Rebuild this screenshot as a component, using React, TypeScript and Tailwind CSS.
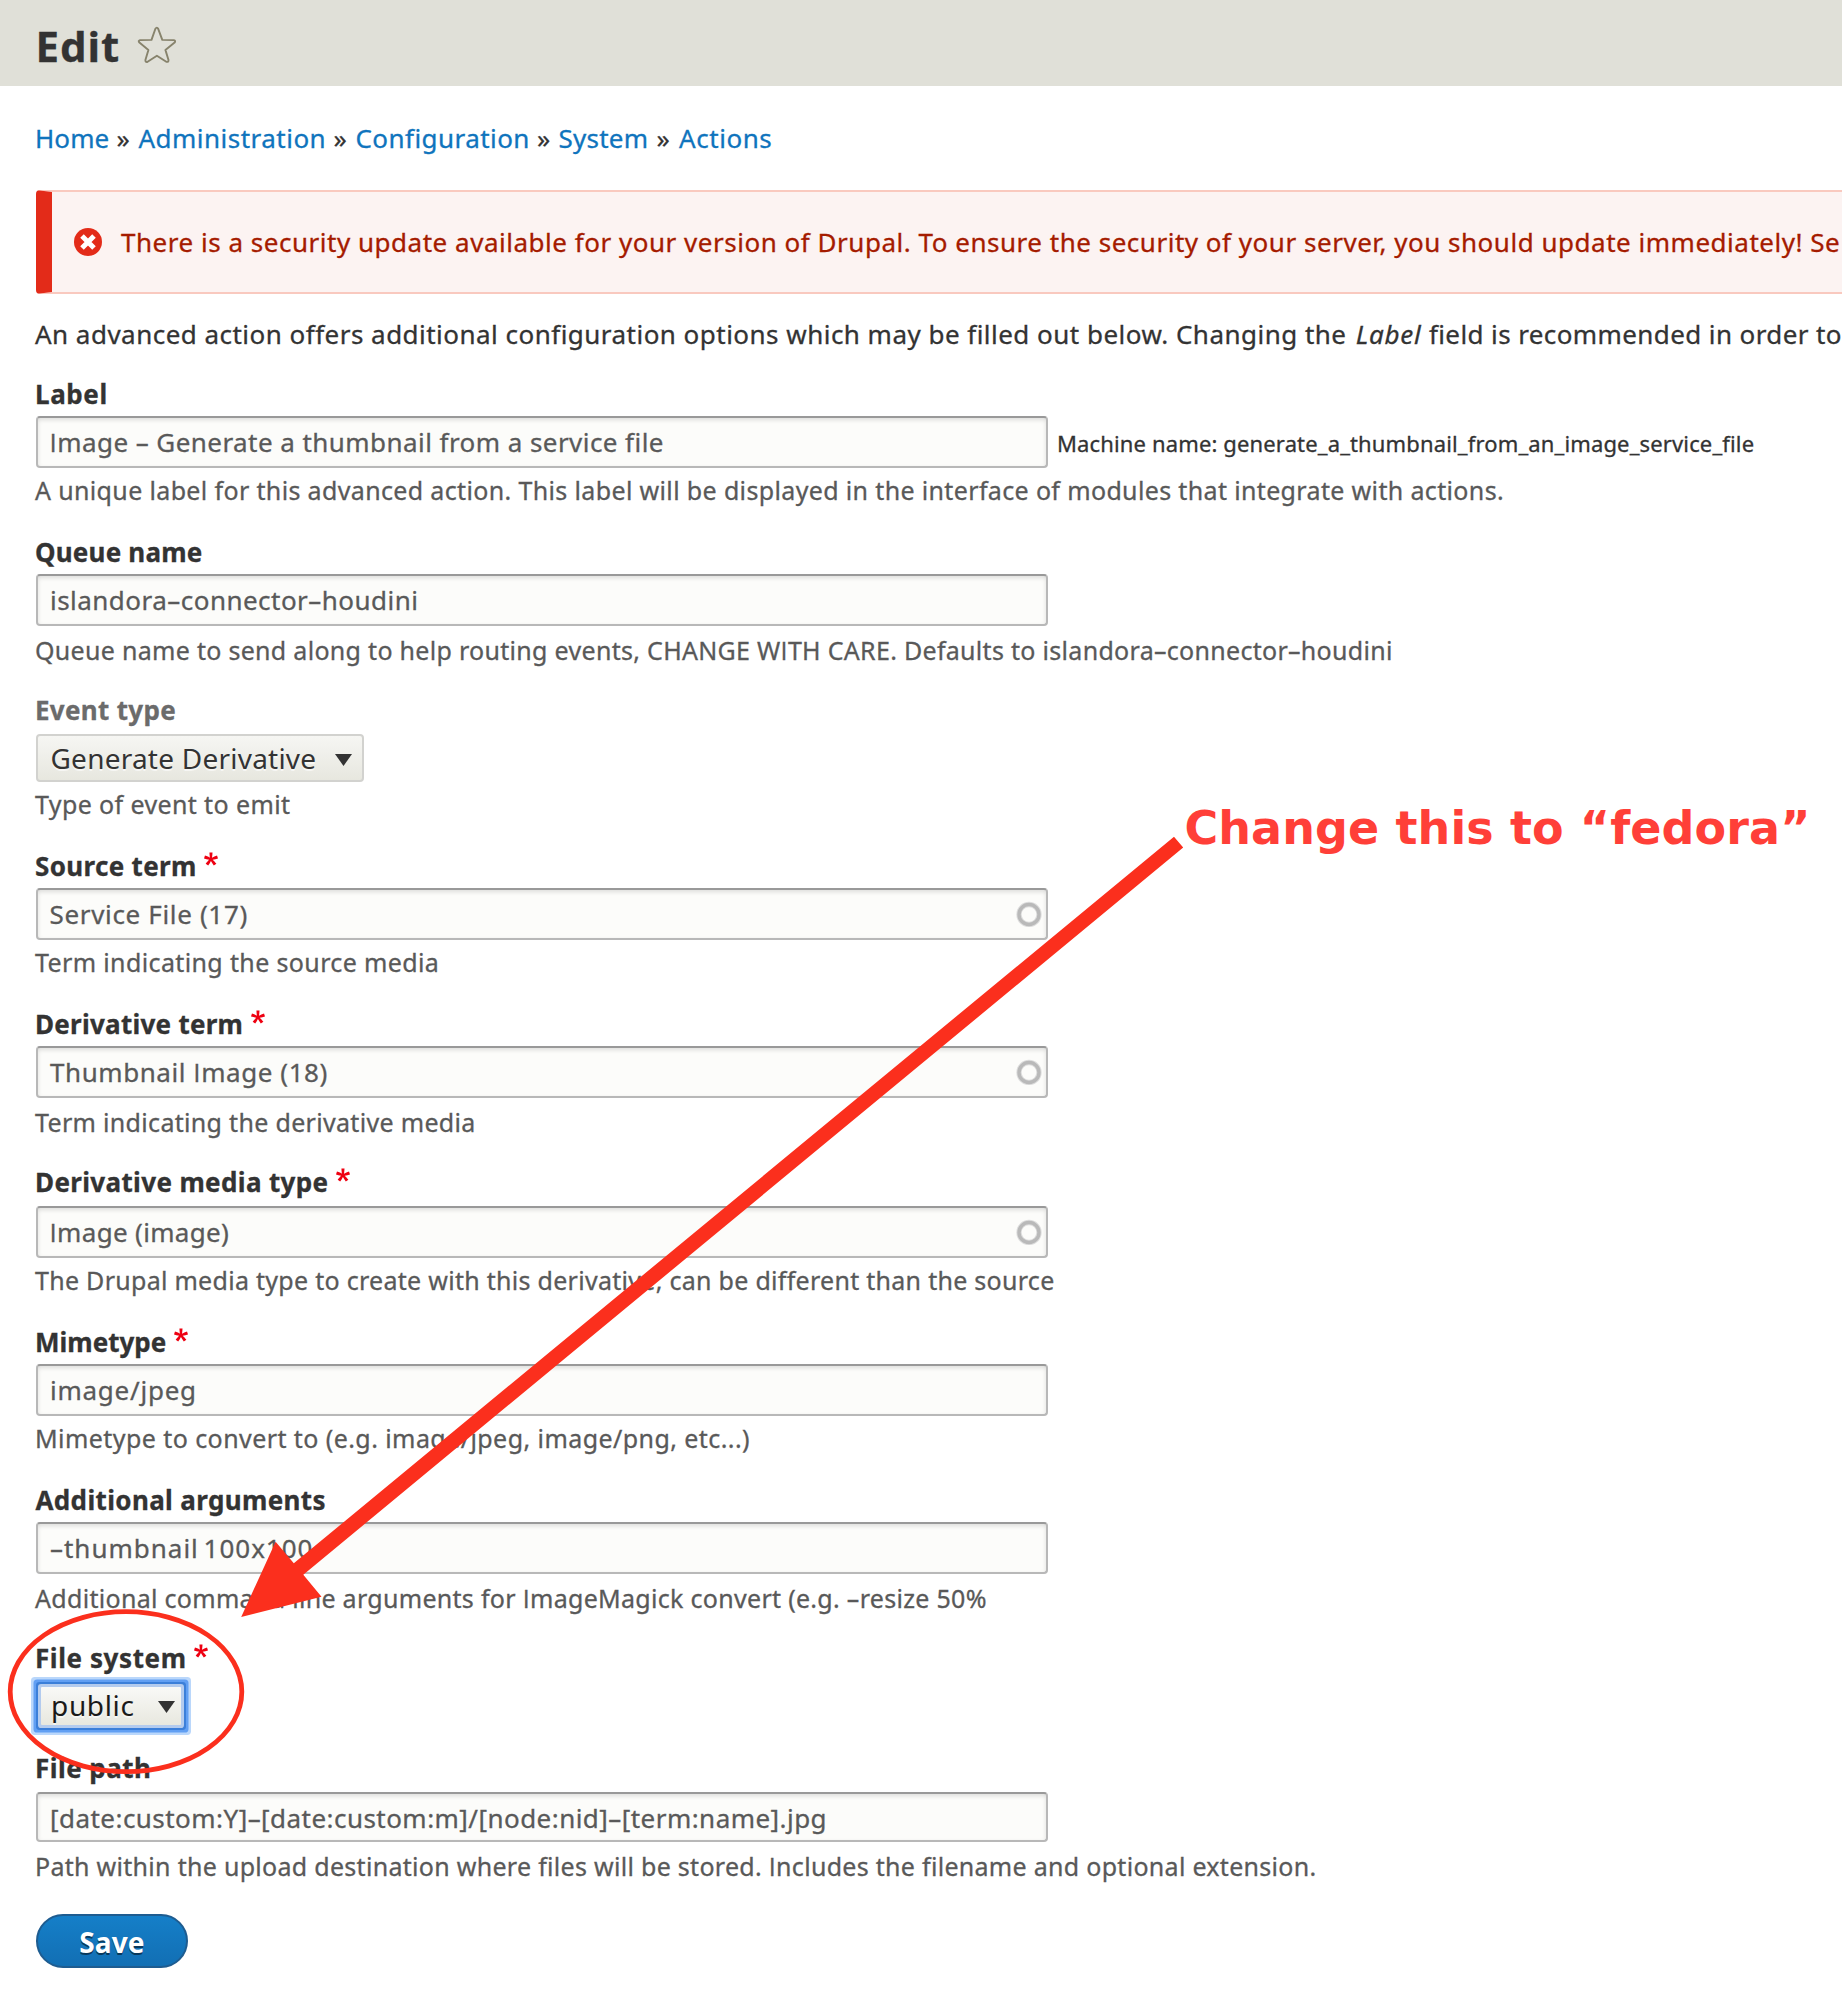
import React from "react";

/* Capital "I" is set in a face that draws it without serifs. */
function T({ children }: { children: string }) {
  return (
    <>
      {children.split(/(I)/).map((part, i) =>
        part === "I" ? (
          <span key={i} className="font-['Open_Sans']">
            I
          </span>
        ) : (
          part
        )
      )}
    </>
  );
}

function RequiredMark() {
  return (
    <svg className="ml-[7.5px] mt-[4px] h-[14px] w-[14px] shrink-0" viewBox="0 0 16 16" fill="#ee0011">
      <path d="M0,7.562l1.114-3.438c2.565,0.906,4.43,1.688,5.59,2.35C6.398,3.553,6.237,1.544,6.22,0.447h3.511c-0.05,1.597-0.234,3.6-0.558,6.003c1.664-0.838,3.566-1.613,5.714-2.325L16,7.562c-2.05,0.678-4.06,1.131-6.028,1.356c0.984,0.856,2.372,2.381,4.166,4.575l-2.906,2.059c-0.935-1.274-2.041-3.009-3.316-5.206c-1.194,2.275-2.244,4.013-3.147,5.206l-2.856-2.059c1.872-2.307,3.211-3.832,4.017-4.575C3.849,8.516,1.872,8.062,0,7.562" />
    </svg>
  );
}

function Label({ text, cls, required, muted }: { text: string; cls: string; required?: boolean; muted?: boolean }) {
  return (
    <div className="flex h-9 items-start">
      <label className={`text-[26px] leading-[36px] font-bold ${muted ? "text-[#6b6b6b]" : "text-[#333]"} ${cls}`}>
        {text}
      </label>
      {required && <RequiredMark />}
    </div>
  );
}

function Input({ text, cls, size = "mt-1 h-[52px]", ring }: { text: string; cls: string; size?: string; ring?: boolean }) {
  return (
    <div
      className={`flex w-[1012px] shrink-0 items-center justify-between rounded-[4px] border-2 border-[#b8b8b8] border-t-[#999] bg-[#fcfcfa] pr-[4.5px] text-[26px] leading-[36px] text-[#595959] shadow-[inset_0_2px_4px_rgba(0,0,0,0.125)] ${size}`}
    >
      <span className={cls}>
        <T>{text}</T>
      </span>
      {ring && (
        <svg className="h-[26px] w-[26px]" viewBox="0 0 26 26" fill="none">
          <circle cx="13" cy="13.5" r="10" stroke="#dedede" strokeWidth="5.4" />
          <circle cx="13" cy="13.5" r="10" stroke="#b9b9b9" strokeWidth="3.4" />
        </svg>
      )}
    </div>
  );
}

function Description({ text, cls }: { text: string; cls: string }) {
  return (
    <div className={`h-8 text-[25px] leading-[32px] text-[#595959] ${cls}`}>
      <T>{text}</T>
    </div>
  );
}

function Caret() {
  return (
    <svg className="mt-[3px] h-[12px] w-[17px]" viewBox="0 0 17 12" fill="#333">
      <path d="M0 0H17L8.5 12Z" />
    </svg>
  );
}

function Sep({ cls }: { cls: string }) {
  return <span className={`shrink-0 text-[#333] ${cls}`}>»</span>;
}

export default function App() {
  return (
    <div className="relative h-[2014px] w-[1842px] overflow-hidden bg-white font-['Noto_Sans','Open_Sans',sans-serif] whitespace-nowrap text-[#333] [-webkit-text-stroke-width:0.3px]">
      <header className="flex h-[86px] items-center bg-[#e0e0d8] pt-[5px] pl-[35.5px]">
        <h1 className="w-[101px] text-[42px] leading-[56px] font-bold tracking-[1px]">Edit</h1>
        <svg className="mb-[2px] h-[40px] w-[40px]" viewBox="136 26 40 40" fill="none" stroke="#87836c" strokeWidth="1.9" strokeLinejoin="round">
          <path d="M154.4 29.8Q155.9 27.4 157.2 29.8L161.3 40.9L172.8 41.1Q175 41.7 173.6 43.6L164.4 50.9L167.5 61Q167.6 63.4 165.3 62.8L155.9 56.8L146.6 62.8Q144.3 63.6 144.4 61L147.4 50.9L138.4 43.6Q136.8 41.7 139 41.1L150.5 40.9Z" />
        </svg>
      </header>

      <main className="pl-[36px]">
        <nav className="mt-[34px] -ml-[1px] flex h-9 text-[26px] leading-[36px] text-[#0f74bd]">
          <a className="w-[81.5px] shrink-0 tracking-[0.1px]">Home</a>
          <Sep cls="w-[22px]" />
          <a className="w-[195px] shrink-0 tracking-[0.48px]">Administration</a>
          <Sep cls="w-[22px]" />
          <a className="w-[181.5px] shrink-0 tracking-[0.44px]">Configuration</a>
          <Sep cls="w-[21.5px]" />
          <a className="w-[98px] shrink-0 tracking-[0.25px]">System</a>
          <Sep cls="w-[22.5px]" />
          <a className="tracking-[0.55px]">Actions</a>
        </nav>

        <div className="mt-[34px] flex h-[104px] items-center overflow-hidden rounded-l-[4px] border-y-2 border-l-[16px] border-y-[#f9c9bf] border-l-[#e32b19] bg-[#fcf3f2] pl-[22px]">
          <svg className="h-[28px] w-[28px] shrink-0" viewBox="0 0 28 28">
            <circle cx="14" cy="14" r="14" fill="#e32b19" />
            <path d="M8 8L20 20M20 8L8 20" stroke="#fff" strokeWidth="5" />
          </svg>
          <p className="ml-[19px] text-[26px] leading-[36px] text-[#a51b00]">
            <span className="tracking-[0.518px]">
              There is a security update available for your version of Drupal. To ensure the security of your server, you
              should update immediately! Se
            </span>
          </p>
        </div>

        <p className="mt-[22px] -ml-[1px] h-9 text-[26px] leading-[36px] tracking-[0.475px]">
          An advanced action offers additional configuration options which may be filled out below. Changing the{" "}
          <em className="ml-[2px] tracking-[0.8px]">Label</em>{" "}
          <span className="tracking-[0.4px]">field is recommended in order to</span>
        </p>

        <section className="mt-6">
          <Label text="Label" cls="-ml-[1px] tracking-[0.6px]" />
          <div className="flex items-center">
            <Input text="Image – Generate a thumbnail from a service file" cls="ml-[11.5px] tracking-[0.44px]" />
            <span className="ml-[9px] pt-[6px] text-[22px] leading-[30px] tracking-[0.14px]">
              Machine name: generate_a_thumbnail_from_an_image_service_file
            </span>
          </div>
          <Description
            text="A unique label for this advanced action. This label will be displayed in the interface of modules that integrate with actions."
            cls="mt-[6px] -ml-[1px] tracking-[0.355px]"
          />
        </section>

        <section className="mt-7">
          <Label text="Queue name" cls="-ml-[1px] tracking-[0.19px]" />
          <Input text="islandora–connector–houdini" cls="ml-[12px] tracking-[0.47px]" />
          <Description
            text="Queue name to send along to help routing events, CHANGE WITH CARE. Defaults to islandora–connector–houdini"
            cls="mt-2 -ml-[1px] tracking-[0.3px]"
          />
        </section>

        <section className="mt-[26px]">
          <Label text="Event type" cls="-ml-[1px] tracking-[0.3px]" muted />
          <div className="mt-[6px] flex h-[48px] w-[328px] items-center justify-between rounded-[4px] border-2 border-[#d2d2cf] bg-gradient-to-b from-[#f6f6f3] to-[#e7e7df] pr-[10px] pl-[12.5px] text-[28px] leading-[38px] [-webkit-text-stroke-width:0px]">
            <span className="-mt-[1px] tracking-[0.23px] [text-shadow:0_2px_rgba(255,255,255,0.6)]">Generate Derivative</span>
            <Caret />
          </div>
          <Description text="Type of event to emit" cls="mt-[6px] -ml-[1px] tracking-[0.385px]" />
        </section>

        <section className="mt-7">
          <Label text="Source term" cls="-ml-[1px] tracking-[0.33px]" required />
          <Input text="Service File (17)" cls="ml-[11.5px] tracking-[0.66px]" ring />
          <Description text="Term indicating the source media" cls="mt-[6px] -ml-[1px] tracking-[0.37px]" />
        </section>

        <section className="mt-7">
          <Label text="Derivative term" cls="-ml-[1px] tracking-[0.26px]" required />
          <Input text="Thumbnail Image (18)" cls="ml-[12px] tracking-[0.56px]" ring />
          <Description text="Term indicating the derivative media" cls="mt-2 -ml-[1px] tracking-[0.32px]" />
        </section>

        <section className="mt-[26px]">
          <Label text="Derivative media type" cls="-ml-[1px] tracking-[0.35px]" required />
          <Input text="Image (image)" cls="ml-[11.5px] tracking-[0.33px]" size="mt-[6px] h-[52px]" ring />
          <Description
            text="The Drupal media type to create with this derivative, can be different than the source"
            cls="mt-[6px] -ml-[1px] tracking-[0.285px]"
          />
        </section>

        <section className="mt-7">
          <Label text="Mimetype" cls="-ml-[1px] tracking-[0px]" required />
          <Input text="image/jpeg" cls="ml-[12px] tracking-[0.75px]" />
          <Description
            text="Mimetype to convert to (e.g. image/jpeg, image/png, etc...)"
            cls="mt-[6px] -ml-[1px] tracking-[0.43px]"
          />
        </section>

        <section className="mt-7">
          <Label text="Additional arguments" cls="-ml-[0.5px] tracking-[0.35px]" />
          <Input text="–thumbnail 100x100" cls="ml-[12px] tracking-[0.99px] [word-spacing:-3px]" />
          <Description
            text="Additional command line arguments for ImageMagick convert (e.g. –resize 50%"
            cls="mt-2 -ml-[1px] tracking-[0.3px]"
          />
        </section>

        <section className="mt-[26px]">
          <Label text="File system" cls="-ml-[1px] tracking-[0.58px]" required />
          <div className="mt-[11px] ml-[5px] flex h-[38px] w-[140px] items-center justify-between rounded-[1px] bg-gradient-to-b from-[#f9f9f7] to-[#e8e8df] pr-[6px] pb-[1px] pl-[10px] text-[28px] leading-[36px] text-[#1a1a1a] shadow-[0_0_0_3px_#b3cbee,0_0_0_5px_#3b7fd9,0_0_0_7.5px_#619ff3,0_0_0_10px_#bad7fb] [-webkit-text-stroke-width:0px]">
            <span className="-mt-[1px] tracking-[0.66px] [text-shadow:0_2px_rgba(255,255,255,0.6)]">public</span>
            <Caret />
          </div>
        </section>

        <section className="mt-[25px]">
          <Label text="File path" cls="-ml-[1px] tracking-[0.45px]" />
          <Input
            text="[date:custom:Y]–[date:custom:m]/[node:nid]–[term:name].jpg"
            cls="ml-[12px] tracking-[0.455px]"
            size="mt-[6px] h-[50px] pt-[2px]"
          />
          <Description
            text="Path within the upload destination where files will be stored. Includes the filename and optional extension."
            cls="mt-2 -ml-[1px] tracking-[0.295px]"
          />
        </section>

        <button className="mt-8 flex h-[54px] w-[152px] items-center justify-center rounded-full border-2 border-[#1e5c90] bg-gradient-to-b from-[#157fc8] to-[#126fb4] pt-[1px] text-[28px] leading-[38px] font-bold tracking-[0.1px] text-white [-webkit-text-stroke-width:0px] [text-shadow:0_2px_rgba(0,0,0,0.5)]">
          Save
        </button>
      </main>

      <svg className="absolute top-0 left-0 h-[2014px] w-[1842px]" viewBox="0 0 1842 2014">
        <path d="M1174 836.7L1183.2 847.5L303.3 1574.7L321.5 1596.7L241.2 1617L275.6 1541.7L293.8 1563.3Z" fill="#fb2f1d" />
        <ellipse cx="126" cy="1691.7" rx="115.8" ry="80" fill="none" stroke="#fb2f1d" strokeWidth="4.8" />
      </svg>
      <div className="absolute top-[800px] left-[1184.4px] font-['DejaVu_Sans'] text-[46px] leading-[56px] font-bold tracking-[0.1px] text-[#ff3f38] [-webkit-text-stroke-width:0px]">
        Change this to “fedora”
      </div>
    </div>
  );
}
